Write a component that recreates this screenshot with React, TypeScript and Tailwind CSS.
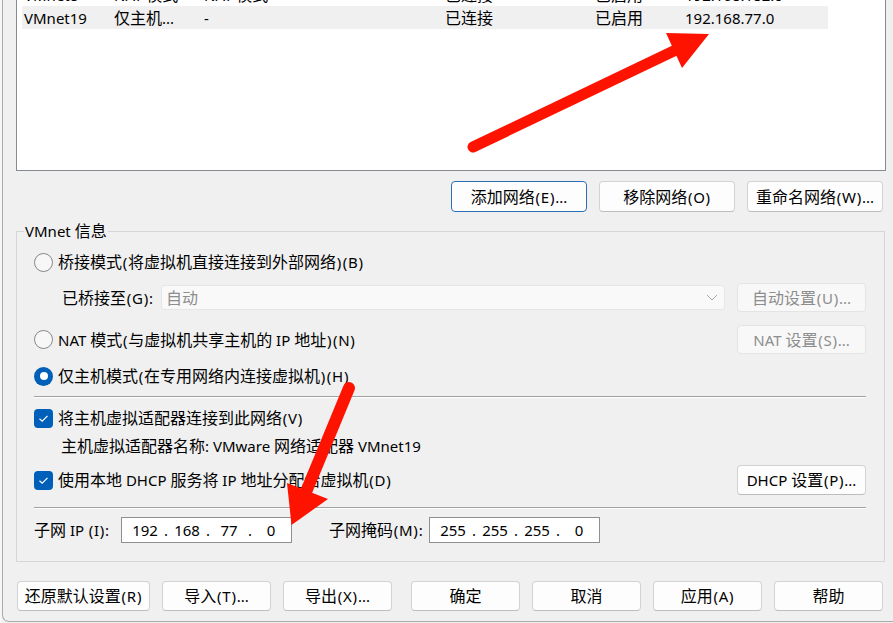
import type { ReactNode } from 'react'

const rows = [
  ['VMnet1', '仅主机...', '-', '已连接', '已启用', '192.168.234.0'],
  ['VMnet8', 'NAT 模式', 'NAT 模式', '已连接', '已启用', '192.168.182.0'],
  ['VMnet19', '仅主机...', '-', '已连接', '已启用', '192.168.77.0'],
]

// CJK glyphs and brackets run a little wider in the original dialog font
function tx(s: string): ReactNode[] {
  return s
    .split(/([\u3000-\u9fff\uff00-\uffef]+|[()])/)
    .filter(Boolean)
    .map((p, i) =>
      p === '(' || p === ')' ? (
        <span key={i} className="inline-block w-[6px] text-center">
          {p}
        </span>
      ) : /[\u3000-\u9fff\uff00-\uffef]/.test(p) ? (
        <span key={i} className="text-[16px]">
          {p}
        </span>
      ) : (
        p
      )
    )
}

function Btn({
  label,
  className = '',
  disabled = false,
  focused = false,
}: {
  label: string
  className?: string
  disabled?: boolean
  focused?: boolean
}) {
  const border = focused
    ? 'border-[#2b6fb4]'
    : disabled
    ? 'border-[#e4e4e4]'
    : 'border-[#d2d2d2] border-b-[#bdbdbd]'
  const tone = disabled ? 'bg-[#f8f8f8] text-[#8d8d8d]' : 'bg-[#fdfdfd] text-black'
  return (
    <button className={`flex items-center justify-center whitespace-nowrap rounded-[4px] border ${border} ${tone} ${className}`}>
      <span className="whitespace-pre">{tx(label)}</span>
    </button>
  )
}

function Radio({ checked = false }: { checked?: boolean }) {
  if (checked) {
    return (
      <span className="flex h-[19px] w-[19px] shrink-0 items-center justify-center rounded-full bg-[#005fb8]">
        <span className="h-[8px] w-[8px] rounded-full bg-white" />
      </span>
    )
  }
  return <span className="h-[19px] w-[19px] shrink-0 rounded-full border border-[#868686] bg-[#f7f7f7]" />
}

function Check() {
  return (
    <span className="flex h-[19px] w-[19px] shrink-0 items-center justify-center rounded-[4px] bg-[#005fb8]">
      <svg width="11" height="9" viewBox="0 0 11 9">
        <path d="M1.5 4.8 L4.2 7.2 L9.5 1.8" fill="none" stroke="white" strokeWidth="1.2" />
      </svg>
    </span>
  )
}

function IpBox({ parts }: { parts: string[] }) {
  return (
    <div className="flex h-[26px] w-[171px] items-center border border-[#8f8f8f] bg-white pl-[4px]">
      {parts.map((p, i) => (
        <div key={i} className="flex">
          {i > 0 && <span className="w-[4px] text-center">.</span>}
          <span className="w-[38px] text-center">{p}</span>
        </div>
      ))}
    </div>
  )
}

export default function App() {
  return (
    <div className="relative h-[623px] w-[893px] overflow-hidden bg-[#f0f0f0] text-[15px] leading-[20px] text-black [font-family:'Noto_Sans','Noto_Sans_CJK_SC',sans-serif]">
      <div className="flex h-full">
        <div className="w-[2px] bg-[#f6f6f6]" />
        <div className="h-[622px] flex-1 rounded-bl-[7px] border-b border-l border-[#ababab]">
          {/* network list */}
          <div className="-mt-[41px] ml-[13px] mr-[7px] h-[212px] border border-[#868a91] bg-white">
            <div className="ml-[5px] w-[806px]">
              {rows.map((r, i) => (
                <div
                  key={r[0]}
                  className={`grid h-[23px] grid-cols-[90px_90px_241px_150px_90px_1fr] items-center pl-[2px] ${i === 2 ? 'bg-[#f0f0f0]' : ''}`}
                >
                  {r.map((c, j) => (
                    <span key={j} className="whitespace-pre">
                      {tx(c)}
                    </span>
                  ))}
                </div>
              ))}
            </div>
          </div>

          <div className="mt-[10px] flex justify-end gap-[12px] pr-[10px]">
            <Btn focused className="h-[31px] w-[136px]" label="添加网络(E)..." />
            <Btn className="h-[31px] w-[136px]" label="移除网络(O)" />
            <Btn className="h-[31px] w-[136px]" label="重命名网络(W)..." />
          </div>

          {/* VMnet info group */}
          <div className="mt-[19px] ml-[13px] mr-[8px] border border-[#d6d6d6] pb-[18px] pl-[17px] pr-[18px]">
            <div className="-mt-[11px] -ml-[10px] w-fit bg-[#f0f0f0] px-[1px]">{tx('VMnet 信息')}</div>

            <div className="mt-[10px] flex h-[22px] items-center gap-[5px]">
              <Radio />
              <span>{tx('桥接模式(将虚拟机直接连接到外部网络)(B)')}</span>
            </div>

            <div className="mt-[10px] flex h-[29px] items-center">
              <span className="ml-[28px] w-[99px] whitespace-nowrap">{tx('已桥接至(G):')}</span>
              <div className="flex h-[25px] w-[564px] items-center justify-between rounded-[3px] border border-[#e6e6e6] bg-[#f9f9f9] pl-[4px] pr-[6px] text-[#8d8d8d]">
                <span>{tx('自动')}</span>
                <svg width="12" height="7" viewBox="0 0 12 7">
                  <path d="M1 1 L6 6 L11 1" fill="none" stroke="#a8a8a8" strokeWidth="1" />
                </svg>
              </div>
              <Btn disabled className="ml-auto h-[29px] w-[129px]" label="自动设置(U)..." />
            </div>

            <div className="mt-[13px] flex h-[29px] items-center gap-[5px]">
              <Radio />
              <span>{tx('NAT 模式(与虚拟机共享主机的 IP 地址)(N)')}</span>
              <Btn disabled className="ml-auto h-[29px] w-[129px]" label="NAT 设置(S)..." />
            </div>

            <div className="mt-[11px] flex h-[22px] items-center gap-[5px]">
              <Radio checked />
              <span>{tx('仅主机模式(在专用网络内连接虚拟机)(H)')}</span>
            </div>

            <div className="mt-[9px] border-b border-t border-b-white border-t-[#a0a0a0]" />

            <div className="mt-[9px] flex h-[22px] items-center gap-[5px]">
              <Check />
              <span>{tx('将主机虚拟适配器连接到此网络(V)')}</span>
            </div>

            <div className="mt-[6px] flex h-[22px] items-center pl-[27px]">
              <span className="whitespace-pre">{tx('主机虚拟适配器名称: VMware 网络适配器 VMnet19')}</span>
            </div>

            <div className="mt-[8px] flex h-[30px] items-center gap-[5px]">
              <Check />
              <span>{tx('使用本地 DHCP 服务将 IP 地址分配给虚拟机(D)')}</span>
              <Btn className="ml-auto h-[30px] w-[129px]" label="DHCP 设置(P)..." />
            </div>

            <div className="mt-[12px] border-b border-t border-b-white border-t-[#a0a0a0]" />

            <div className="mt-[8px] flex h-[26px] items-center">
              <span className="w-[87px] whitespace-pre">{tx('子网 IP (I):')}</span>
              <IpBox parts={['192', '168', '77', '0']} />
              <span className="ml-[37px] w-[100px] whitespace-nowrap">{tx('子网掩码(M):')}</span>
              <IpBox parts={['255', '255', '255', '0']} />
            </div>
          </div>

          <div className="mt-[19px] flex justify-between pl-[14px] pr-[10px]">
            <div className="flex gap-[12px]">
              <Btn className="h-[30px] w-[133px]" label="还原默认设置(R)" />
              <Btn className="h-[30px] w-[109px]" label="导入(T)..." />
              <Btn className="h-[30px] w-[109px]" label="导出(X)..." />
            </div>
            <div className="flex gap-[12px]">
              <Btn className="h-[30px] w-[109px]" label="确定" />
              <Btn className="h-[30px] w-[109px]" label="取消" />
              <Btn className="h-[30px] w-[109px]" label="应用(A)" />
              <Btn className="h-[30px] w-[109px]" label="帮助" />
            </div>
          </div>
        </div>
      </div>

      {/* red annotation arrows */}
      <svg className="pointer-events-none absolute inset-0" width="893" height="623" viewBox="0 0 893 623">
        <line x1="473" y1="147" x2="680" y2="48" stroke="#fe1200" strokeWidth="11" strokeLinecap="round" />
        <polygon points="666,33 709,34 682,68" fill="#fe1200" />
        <line x1="349" y1="388" x2="306" y2="492" stroke="#fe1200" strokeWidth="12" strokeLinecap="round" />
        <polygon points="287,483 328,499 291.5,525" fill="#fe1200" />
      </svg>
    </div>
  )
}
